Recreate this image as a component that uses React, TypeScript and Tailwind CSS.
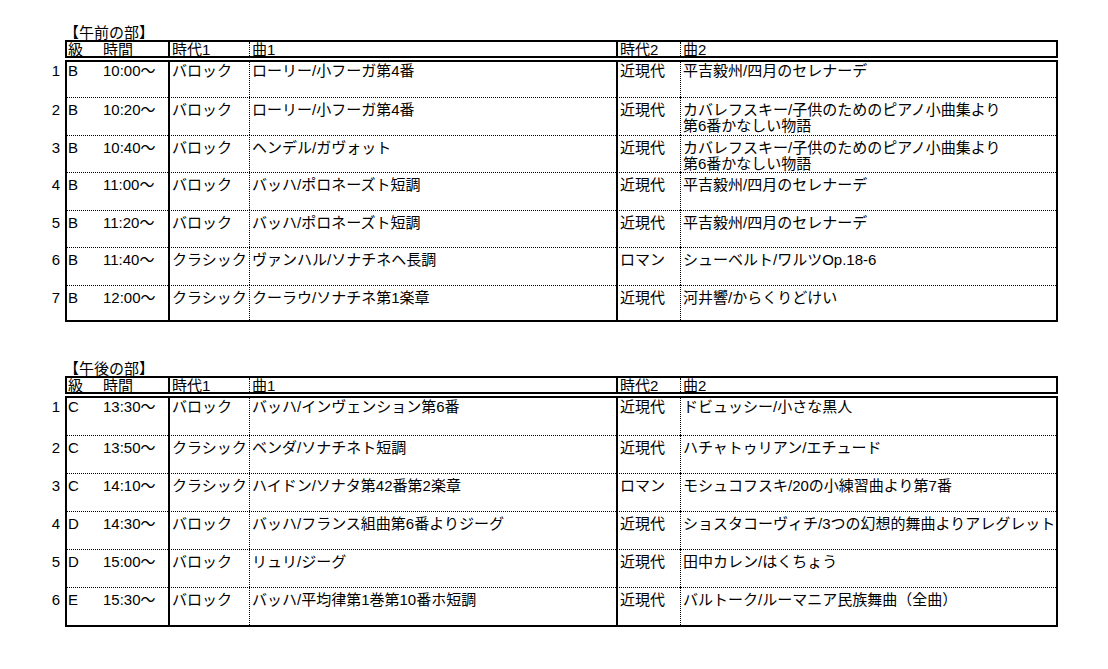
import React from "react";

interface Entry {
  no: number;
  grade: string;
  time: string;
  era1: string;
  piece1: string[];
  era2: string;
  piece2: string[];
}

interface Session {
  title: string;
  firstH: string;
  midH: string;
  lastH: string;
  entries: Entry[];
}

const morning: Entry[] = [
  { no: 1, grade: "B", time: "10:00～", era1: "バロック", piece1: ["ローリー/小フーガ第4番"], era2: "近現代", piece2: ["平吉毅州/四月のセレナーデ"] },
  { no: 2, grade: "B", time: "10:20～", era1: "バロック", piece1: ["ローリー/小フーガ第4番"], era2: "近現代", piece2: ["カバレフスキー/子供のためのピアノ小曲集より", "第6番かなしい物語"] },
  { no: 3, grade: "B", time: "10:40～", era1: "バロック", piece1: ["ヘンデル/ガヴォット"], era2: "近現代", piece2: ["カバレフスキー/子供のためのピアノ小曲集より", "第6番かなしい物語"] },
  { no: 4, grade: "B", time: "11:00～", era1: "バロック", piece1: ["バッハ/ポロネーズト短調"], era2: "近現代", piece2: ["平吉毅州/四月のセレナーデ"] },
  { no: 5, grade: "B", time: "11:20～", era1: "バロック", piece1: ["バッハ/ポロネーズト短調"], era2: "近現代", piece2: ["平吉毅州/四月のセレナーデ"] },
  { no: 6, grade: "B", time: "11:40～", era1: "クラシック", piece1: ["ヴァンハル/ソナチネヘ長調"], era2: "ロマン", piece2: ["シューベルト/ワルツOp.18-6"] },
  { no: 7, grade: "B", time: "12:00～", era1: "クラシック", piece1: ["クーラウ/ソナチネ第1楽章"], era2: "近現代", piece2: ["河井響/からくりどけい"] },
];

const afternoon: Entry[] = [
  { no: 1, grade: "C", time: "13:30～", era1: "バロック", piece1: ["バッハ/インヴェンション第6番"], era2: "近現代", piece2: ["ドビュッシー/小さな黒人"] },
  { no: 2, grade: "C", time: "13:50～", era1: "クラシック", piece1: ["ベンダ/ソナチネト短調"], era2: "近現代", piece2: ["ハチャトゥリアン/エチュード"] },
  { no: 3, grade: "C", time: "14:10～", era1: "クラシック", piece1: ["ハイドン/ソナタ第42番第2楽章"], era2: "ロマン", piece2: ["モシュコフスキ/20の小練習曲より第7番"] },
  { no: 4, grade: "D", time: "14:30～", era1: "バロック", piece1: ["バッハ/フランス組曲第6番よりジーグ"], era2: "近現代", piece2: ["ショスタコーヴィチ/3つの幻想的舞曲よりアレグレット"] },
  { no: 5, grade: "D", time: "15:00～", era1: "バロック", piece1: ["リュリ/ジーグ"], era2: "近現代", piece2: ["田中カレン/はくちょう"] },
  { no: 6, grade: "E", time: "15:30～", era1: "バロック", piece1: ["バッハ/平均律第1巻第10番ホ短調"], era2: "近現代", piece2: ["バルトーク/ルーマニア民族舞曲（全曲）"] },
];

const sessions: Session[] = [
  { title: "【午前の部】", firstH: "h-[35px]", midH: "h-[37.5px]", lastH: "h-[37.5px]", entries: morning },
  { title: "【午後の部】", firstH: "h-[36.5px]", midH: "h-[38px]", lastH: "h-[40px]", entries: afternoon },
];

// dotted hairline drawn as a background so the solid verticals stay unbroken
const dotted =
  "bg-[repeating-linear-gradient(to_right,#000_0_1px,transparent_1px_2px)] bg-no-repeat bg-[length:100%_1px] bg-top";

function Lines({ lines }: { lines: string[] }) {
  return (
    <>
      {lines.map((l) => (
        <div key={l} className="whitespace-nowrap">{l}</div>
      ))}
    </>
  );
}

function Table({ s }: { s: Session }) {
  const n = s.entries.length;
  return (
    <div>
      <div className="h-[15px] pl-[64px] leading-[16px]">{s.title}</div>
      {/* header */}
      <div className="flex h-[22px] leading-[15px]">
        <div className="w-[65px]" />
        <div className="flex border-t-2 border-b-[6px] border-double border-black">
          <div className="flex w-[105px] border-x-2 border-solid border-black pl-[1px]">
            <span className="w-[35px]">級</span>
            <span>時間</span>
          </div>
          <div className="w-[80px] border-r border-dotted border-black pl-[2px]">時代1</div>
          <div className="w-[368px] border-r-2 border-solid border-black pl-[2px]">曲1</div>
          <div className="w-[63px] border-r border-dotted border-black pl-[2px]">時代2</div>
          <div className="w-[377px] border-r-2 border-solid border-black pl-[2px]">曲2</div>
        </div>
      </div>
      {s.entries.map((e, i) => {
        const first = i === 0;
        const last = i === n - 1;
        const h = first ? s.firstH : last ? s.lastH : s.midH;
        const pad = first ? "pt-[1px]" : "pt-[5px]";
        return (
          <div key={e.no} className={`flex leading-[16px] ${h}`}>
            <div className={`w-[65px] pr-[5px] text-right ${pad}`}>{e.no}</div>
            <div className={`flex ${first ? "" : dotted} ${last ? "border-b-2 border-solid border-black" : ""}`}>
              <div className={`flex w-[105px] border-x-2 border-solid border-black pl-[1px] ${pad}`}>
                <span className="w-[35px]">{e.grade}</span>
                <span className="whitespace-nowrap">{e.time}</span>
              </div>
              <div className={`w-[80px] border-r border-dotted border-black pl-[2px] whitespace-nowrap ${pad}`}>{e.era1}</div>
              <div className={`w-[368px] border-r-2 border-solid border-black pl-[2px] ${pad}`}>
                <Lines lines={e.piece1} />
              </div>
              <div className={`w-[63px] border-r border-dotted border-black pl-[2px] whitespace-nowrap ${pad}`}>{e.era2}</div>
              <div className={`w-[377px] border-r-2 border-solid border-black pl-[2px] ${pad}`}>
                <Lines lines={e.piece2} />
              </div>
            </div>
          </div>
        );
      })}
    </div>
  );
}

export default function App() {
  return (
    <div className="min-h-[669px] w-[1108px] bg-white pt-[25px] font-['Liberation_Sans','Noto_Sans_CJK_JP',sans-serif] text-[15px] text-black">
      <Table s={sessions[0]} />
      <div className="mt-[39px]">
        <Table s={sessions[1]} />
      </div>
    </div>
  );
}
